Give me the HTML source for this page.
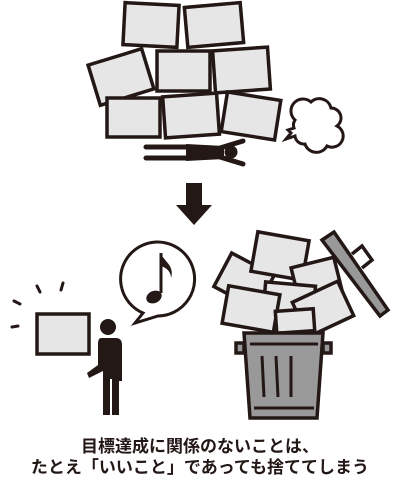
<!DOCTYPE html>
<html><head><meta charset="utf-8"><style>
html,body{margin:0;padding:0;background:#fff;width:400px;height:480px;overflow:hidden}
svg{position:absolute;left:0;top:0}
.t{position:absolute;left:0;width:400px;text-align:center;font-family:"Liberation Sans","Noto Sans CJK JP",sans-serif;font-weight:bold;font-size:17px;line-height:21px;color:#231815}
</style></head><body>
<svg width="400" height="480" viewBox="0 0 400 480">
<g fill="#e6e6e6" stroke="#231815" stroke-width="3.5" stroke-linejoin="miter">
<rect x="124" y="4" width="54" height="42" transform="rotate(3 151 25)"/>
<rect x="186" y="5" width="56" height="40" transform="rotate(-5 214 25)"/>
<rect x="93" y="56" width="56" height="42" transform="rotate(-17 121 77)"/>
<rect x="157" y="51" width="53" height="40"/>
<rect x="214" y="49" width="55" height="42" transform="rotate(-4 241 70)"/>
<rect x="107" y="98" width="53" height="39"/>
<rect x="164" y="95" width="54" height="41" transform="rotate(-4 191 115)"/>
<rect x="224" y="96" width="54" height="40" transform="rotate(9 251 116)"/>
</g>
<g stroke="#231815" stroke-width="5" stroke-linecap="round" fill="#231815">
<line x1="146" y1="147" x2="190" y2="147"/>
<line x1="146" y1="158" x2="190" y2="158"/>
<line x1="220" y1="148" x2="243" y2="141"/>
<line x1="220" y1="157" x2="243" y2="164"/>
<path d="M186 144 L224 146 L224 159 L186 161z" stroke="none"/>
<circle cx="231" cy="152" r="6.5" stroke="none"/>
</g>
<path d="M295 120 a10 10 0 0 1 16 -18 a12 12 0 0 1 20 6 a10 10 0 0 1 6 18 a11 11 0 0 1 -10 20 a12 12 0 0 1 -22 -2 a9 9 0 0 1 -10 -8 l-9 3 l5 -6 l-3 -3 l6 -2 a9 9 0 0 1 1 -8z" fill="#fff" stroke="#231815" stroke-width="3"/>
<path d="M186 183h16v22h10l-18 20l-18 -20h10z" fill="#231815"/>
<path d="M135 323 l8 -10 a37 37 0 1 1 15 3 z" fill="#fff" stroke="#231815" stroke-width="3"/>
<path d="M161 253v40" stroke="#231815" stroke-width="3"/>
<ellipse cx="154" cy="297" rx="8" ry="6" fill="#231815" transform="rotate(-25 154 297)"/>
<path d="M161 253c2 8 14 12 10 25c0 -6 -4 -10 -10 -12z" fill="#231815"/>
<g stroke="#231815" stroke-width="3" stroke-linecap="round">
<line x1="12" y1="327" x2="18" y2="326"/><line x1="14" y1="301" x2="20" y2="304"/>
<line x1="37" y1="286" x2="40" y2="292"/><line x1="63" y1="283" x2="61" y2="290"/>
</g>
<rect x="37" y="314" width="52" height="40" fill="#e6e6e6" stroke="#231815" stroke-width="3.5"/>
<g fill="#231815">
<circle cx="108" cy="327" r="8"/>
<path d="M101 338h15q6 0 6 7v36h-3v34h-7v-36h-2v36h-7v-44l-14 7l-2 -5l11 -8v-21q0 -6 3 -6z"/>
</g>
<g fill="#e6e6e6" stroke="#231815" stroke-width="3.5">
<rect x="220" y="262" width="48" height="38" transform="rotate(28 244 281)"/>
<rect x="254" y="236" width="52" height="40" transform="rotate(10 280 256)"/>
<rect x="295" y="262" width="44" height="38" transform="rotate(-14 317 281)"/>
<rect x="264" y="284" width="50" height="36" transform="rotate(5 289 302)"/>
<rect x="225" y="290" width="52" height="38" transform="rotate(10 251 309)"/>
<rect x="298" y="290" width="50" height="38" transform="rotate(-25 323 309)"/>
<rect x="276" y="310" width="38" height="22" transform="rotate(-4 295 321)"/>
</g>
<g stroke="#231815" stroke-width="3.5" fill="#999">
<rect x="236" y="343" width="8" height="10"/><rect x="323" y="343" width="8" height="10"/>
<path d="M244 333h79l-6 85h-67z"/>
<path d="M322 240l12 -8l54 78l-8 6z"/>
<path d="M352 254l10 -8l10 14l-10 8" fill="none"/>
</g>
<g stroke="#231815" stroke-width="3">
<line x1="250" y1="344" x2="318" y2="344"/><line x1="254" y1="408" x2="314" y2="408"/>
<line x1="262" y1="356" x2="264" y2="397"/><line x1="276" y1="356" x2="278" y2="397"/><line x1="291" y1="356" x2="291" y2="397"/>
</g>
</svg>
<div class="t" style="top:436px">目標達成に関係のないことは、<br>たとえ「いいこと」であっても捨ててしまう</div>
</body></html>
